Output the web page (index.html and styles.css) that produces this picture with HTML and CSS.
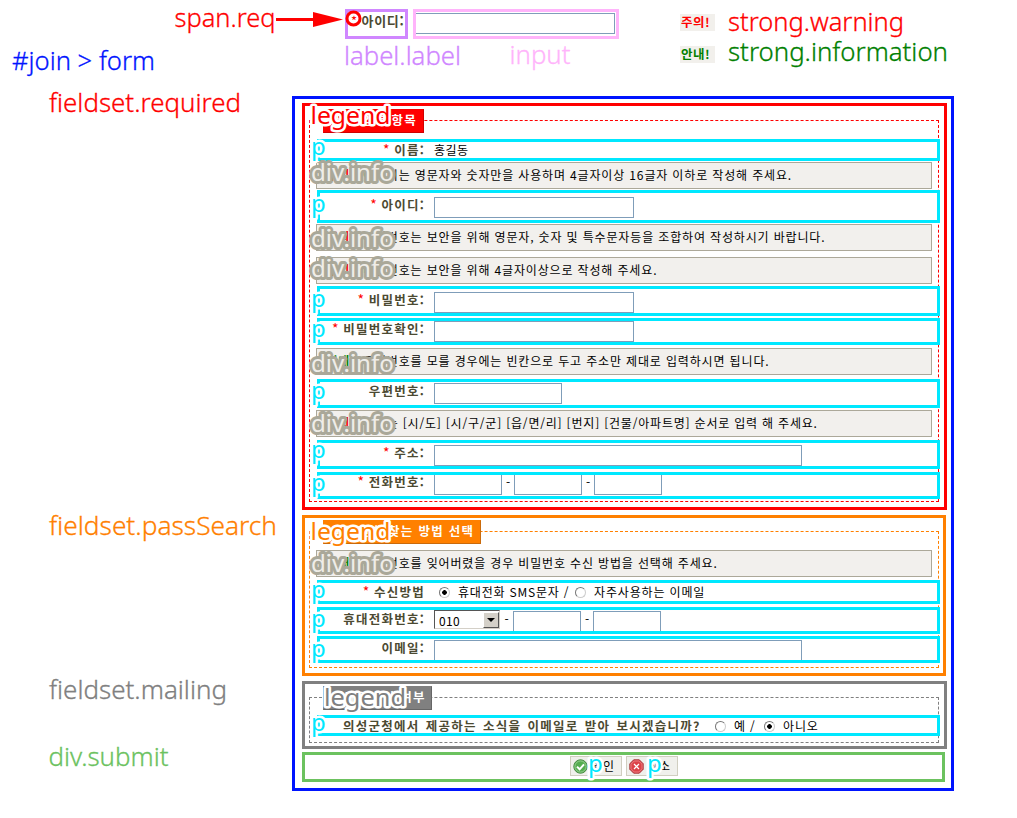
FILE: index.html
```html
<!DOCTYPE html>
<html lang="ko">
<head>
<meta charset="utf-8">
<title>join form</title>
<link rel="stylesheet" href="styles.css">
</head>
<body>
<main class="sheet">
  <div class="samples">
    <div class="sample-label"><span class="req">*</span><b>아이디:</b></div>
    <div class="sample-input"><span></span></div>
    <div class="sample-notes"><strong class="warning">주의!</strong><strong class="information">안내!</strong></div>
  </div>

  <div class="join">
    <section class="group required">
      <div class="fieldset">
        <div class="legend">필수 입력 항목</div>
        <div class="row name"><label><i>*</i> 이름:</label><span class="txt">홍길동</span></div>
        <div class="info i1"><strong class="warning">주의!</strong><span>아이디는 영문자와 숫자만을 사용하며 4글자이상 16글자 이하로 작성해 주세요.</span></div>
        <div class="row userid"><label><i>*</i> 아이디:</label><span class="input w200"></span></div>
        <div class="info i2"><strong class="warning">주의!</strong><span>비밀번호는 보안을 위해 영문자, 숫자 및 특수문자등을 조합하여 작성하시기 바랍니다.</span></div>
        <div class="info i3"><strong class="warning">주의!</strong><span>비밀번호는 보안을 위해 4글자이상으로 작성해 주세요.</span></div>
        <div class="row pass"><label><i>*</i> 비밀번호:</label><span class="input w200"></span></div>
        <div class="row pass2"><label><i>*</i> 비밀번호확인:</label><span class="input w200"></span></div>
        <div class="info i4"><strong class="information">안내!</strong><span>우편번호를 모를 경우에는 빈칸으로 두고 주소만 제대로 입력하시면 됩니다.</span></div>
        <div class="row zip"><label>우편번호:</label><span class="input w128"></span></div>
        <div class="info i5"><strong class="warning">주의!</strong><span>주소는 [시/도] [시/구/군] [읍/면/리] [번지] [건물/아파트명] 순서로 입력 해 주세요.</span></div>
        <div class="row addr"><label><i>*</i> 주소:</label><span class="input w368"></span></div>
        <div class="row tel"><label><i>*</i> 전화번호:</label><span class="input w68"></span><em>-</em><span class="input w68"></span><em>-</em><span class="input w68"></span></div>
      </div>
    </section>

    <section class="group search">
      <div class="fieldset">
        <div class="legend">비밀번호 찾는 방법 선택</div>
        <div class="info i6"><strong class="information">안내!</strong><span>비밀번호를 잊어버렸을 경우 비밀번호 수신 방법을 선택해 주세요.</span></div>
        <div class="row method"><label><i>*</i> 수신방법</label><span class="radio on"></span><span class="txt sms">휴대전화 SMS문자 /</span><span class="radio"></span><span class="txt">자주사용하는 이메일</span></div>
        <div class="row mobile"><label>휴대전화번호:</label><span class="select"><span>010</span><span class="arrow"></span></span><em>-</em><span class="input w68"></span><em>-</em><span class="input w68"></span></div>
        <div class="row email"><label>이메일:</label><span class="input w368"></span></div>
      </div>
    </section>

    <section class="group mailing">
      <div class="fieldset">
        <div class="legend">이메일수신 여부</div>
        <div class="row news"><label>의성군청에서 제공하는 소식을 이메일로 받아 보시겠습니까?</label><span class="radio"></span><span class="txt yes">예 /</span><span class="radio on"></span><span class="txt">아니오</span></div>
      </div>
    </section>

    <div class="submit">
      <div class="button">
        <svg width="15" height="15" viewBox="0 0 15 15"><circle cx="7.5" cy="7.5" r="6.7" fill="#55ad50" stroke="#43883f"/><circle cx="7.5" cy="7.5" r="5.6" fill="none" stroke="#a4d7a0" stroke-width=".8"/><path d="M4 7.6l2.6 2.7L11 5.4" fill="none" stroke="#fff" stroke-width="2"/></svg>
        <span>확인</span>
      </div>
      <div class="button">
        <svg width="15" height="15" viewBox="0 0 15 15"><path d="M4.7 .8h5.6l3.9 3.9v5.6l-3.9 3.9H4.700L.8 10.300V4.700z" fill="#dc4248" stroke="#a83c40"/><path d="M5.200 2h4.600L13 5.200v4.600L9.800 13H5.200L2 9.800V5.200z" fill="none" stroke="#f08a8d" stroke-width=".8"/><path d="M5 5l5 5M10 5l-5 5" stroke="#fff" stroke-width="1.2"/></svg>
        <span>취소</span>
      </div>
    </div>
  </div>

  <svg class="notes" width="1017" height="818" viewBox="0 0 1017 818">
    <g class="title">
      <text class="c-red" x="174.500" y="27" textLength="101" lengthAdjust="spacingAndGlyphs">span.req</text>
      <text class="c-blue" x="12" y="70" textLength="143" lengthAdjust="spacingAndGlyphs">#join &gt; form</text>
      <text class="c-red" x="49" y="112" textLength="192" lengthAdjust="spacingAndGlyphs">fieldset.required</text>
      <text class="c-violet" x="344" y="65" textLength="117" lengthAdjust="spacingAndGlyphs">label.label</text>
      <text class="c-pink" x="509.500" y="64" textLength="61" lengthAdjust="spacingAndGlyphs">input</text>
      <text class="c-red" x="728" y="31" textLength="176" lengthAdjust="spacingAndGlyphs">strong.warning</text>
      <text class="c-green" x="728" y="61" textLength="220" lengthAdjust="spacingAndGlyphs">strong.information</text>
      <text class="c-orange" x="49" y="535" textLength="228" lengthAdjust="spacingAndGlyphs">fieldset.passSearch</text>
      <text class="c-gray" x="49" y="699" textLength="178" lengthAdjust="spacingAndGlyphs">fieldset.mailing</text>
      <text class="c-lime" x="48.500" y="766" textLength="120" lengthAdjust="spacingAndGlyphs">div.submit</text>
    </g>
    <path d="M276 19.500H316" stroke="#f00" stroke-width="3"/>
    <path d="M313 12L343 19.500L313 27Z" fill="#f00"/>
    <circle cx="353.500" cy="18.500" r="6.500" fill="none" stroke="#f00" stroke-width="3"/>
    <g class="tag">
      <text class="c-red" x="310.500" y="123.500" textLength="80" lengthAdjust="spacingAndGlyphs">legend</text>
      <text class="c-orange" x="310.500" y="540" textLength="80" lengthAdjust="spacingAndGlyphs">legend</text>
      <text class="c-gray" x="324" y="706" textLength="82" lengthAdjust="spacingAndGlyphs">legend</text>
    </g>
    <g class="tag c-cyan">
      <text x="311" y="154.500">p</text><text x="311" y="212">p</text><text x="311" y="307">p</text><text x="311" y="336.500">p</text>
      <text x="311" y="399">p</text><text x="311" y="458">p</text><text x="311" y="491">p</text><text x="311" y="598">p</text>
      <text x="311" y="627">p</text><text x="311" y="657">p</text><text x="311" y="731">p</text>
      <text x="588" y="772">p</text><text x="647" y="772">p</text>
    </g>
    <g class="tag infotag">
      <text x="311" y="181" textLength="83" lengthAdjust="spacingAndGlyphs">div.info</text>
      <text x="311" y="247" textLength="83" lengthAdjust="spacingAndGlyphs">div.info</text>
      <text x="311" y="276.500" textLength="83" lengthAdjust="spacingAndGlyphs">div.info</text>
      <text x="311" y="372" textLength="83" lengthAdjust="spacingAndGlyphs">div.info</text>
      <text x="311" y="431.500" textLength="83" lengthAdjust="spacingAndGlyphs">div.info</text>
      <text x="311" y="571.500" textLength="83" lengthAdjust="spacingAndGlyphs">div.info</text>
    </g>
  </svg>
</main>
</body>
</html>
```
FILE: styles.css
```css
* { box-sizing: border-box; }
body {
  margin: 0;
  background: #fff;
  color: #000;
  font: 12px/16px "Noto Sans CJK KR", sans-serif;
  letter-spacing: 0.85px;
}
i, em { font-style: normal; }
.sheet { position: relative; width: 1017px; height: 818px; overflow: hidden; }
.notes { position: absolute; left: 0; top: 0; }

/* element samples above the form */
.samples { display: flex; height: 96px; padding: 9px 0 0 345px; }
.sample-label { width: 63px; height: 30px; border: 3px solid #d087ff; padding: 1px 0 0 3px; color: #4c4a32; white-space: nowrap; display: flex; font-size: 13px; letter-spacing: 0.7px; }
.sample-label .req { width: 10.500px; }
.sample-input { width: 206px; height: 30px; margin-left: 5px; border: 3px solid #ffb4fb; padding-top: 1px; }
.sample-input span { display: block; width: 199px; height: 21px; border: 1px solid #7f9db9; border-left: 0; }
.sample-notes { margin: 5px 0 0 61px; display: flex; flex-direction: column; gap: 15px; letter-spacing: 0.5px; }
.sample-notes strong { width: 35px; height: 17px; padding-left: 1px; background: #f2f0ec; font-size: 12.500px; }
.req, i { color: #f00; font-weight: 400; }
.warning { color: #f00; }
.information { color: #008000; }

.join { margin-left: 292px; width: 662px; height: 695px; border: 3px solid #0014ff; padding: 4px 0 0 7px; }
.group { width: 645px; border: 3px solid; }
.group.required { height: 407px; color: #f00; padding: 14px 0 0 4px; }
.group.search { width: 644px; height: 161px; margin-top: 5px; color: #ff8000; padding: 13px 0 0 4px; }
.group.mailing { height: 68px; margin-top: 5px; color: #808080; padding: 13px 0 0 4px; }
.fieldset { width: 630px; border: 1px dashed; }
.required .fieldset { height: 382px; }
.search .fieldset { height: 137px; }
.mailing .fieldset { height: 46px; }
.legend {
  width: 101px; height: 24px; margin: -12px 0 0 13px; padding: 2px 8px;
  background: #f00; border: 1px solid #d00000; border-top-color: #f00; border-left-color: #f00;
  color: #fff; font-size: 12.500px; font-weight: 700; white-space: nowrap; letter-spacing: 1.100px;
}
.search .legend { width: 158px; background: #ff8000; border-color: #ff8000 #c96a0c #c96a0c #ff8000; letter-spacing: 1.300px; }
.mailing .legend { width: 109px; background: #808080; border-color: #808080 #666 #666 #808080; letter-spacing: 1.200px; }

.info {
  display: flex; align-items: center; width: 616px; height: 27px; margin-left: 6px; padding: 0 0 1px 10px;
  border: 1px solid #aca899; background: #f2f0ed; color: #000; white-space: nowrap;
}
.info strong { width: 36px; letter-spacing: 0.300px; }
.i5 { letter-spacing: 0.800px; }
.row { display: flex; width: 623px; margin-left: 7px; border: 3px solid #00e8ff; background: #fff; color: #000; overflow: hidden; white-space: nowrap; }
.row label { flex: none; width: 105px; margin-right: 9px; text-align: right; font-size: 12.500px; font-weight: 700; color: #4c4a32; letter-spacing: 1.250px; }
.row label i { font-size: 14px; line-height: 12px; letter-spacing: 0; }
.row em { flex: none; width: 12px; text-align: center; letter-spacing: 0; }
.input { flex: none; height: 21px; border: 1px solid #7f9db9; background: #fff; }
.w68 { width: 68px; }
.w128 { width: 128px; }
.w200 { width: 200px; }
.w368 { width: 368px; }

.name { height: 22px; margin-top: 6px; }
.name .txt { letter-spacing: 0.400px; }
.i1 { margin-top: 1px; }
.userid { height: 33px; margin-top: 1px; padding-top: 4px; }
.i2 { margin-top: 1px; }
.i3 { margin-top: 6px; }
.pass { height: 30px; margin-top: 2px; padding-top: 3px; }
.pass2 { height: 27px; margin-top: 2px; }
.i4 { margin-top: 3px; }
.zip { height: 29px; margin-top: 4px; padding-top: 1px; }
.i5 { margin-top: 2px; }
.addr { height: 29px; margin-top: 3px; padding-top: 2px; }
.tel { height: 27px; margin-top: 3px; }
.tel > * { margin-top: -1px; }
.i6 { margin-top: 6px; }
.method { height: 24px; margin-top: 3px; padding-top: 1px; }
.mobile { height: 27px; margin-top: 3px; padding-top: 1px; }
.email { height: 27px; margin-top: 2px; padding-top: 1px; }
.news { height: 21px; margin-top: 5px; }

.radio { flex: none; width: 11px; height: 11px; margin: 3px 8px 0 5px; border: 1px solid; border-color: #777 #ccc #ccc #777; border-radius: 50%; background: #fff; }
.radio.on { background: radial-gradient(circle, #000 0 2px, #fff 2.600px); }
.sms { width: 117px; letter-spacing: 0.800px; }
.method .radio + .txt + .radio { margin-left: 0; }
.news label { width: 381px; margin: 0; padding-left: 23px; text-align: left; word-spacing: 1.500px; }
.news .radio { margin: 3px 8px 0 14px; }
.news .yes { width: 16px; }
.select { flex: none; display: flex; justify-content: space-between; width: 66px; height: 19px; margin-top: -1px; border: 1px solid #d4d0c8; border-top-color: #555; border-left-color: #555; padding-left: 4px; line-height: 20px; letter-spacing: 0.300px; }
.arrow { width: 16px; height: 16px; margin-top: 1px; background: #d4d0c8; border: 1px solid; border-color: #fff #555 #555 #fff; display: flex; align-items: center; justify-content: center; }
.arrow::before { content: ""; border: 4px solid transparent; border-top-color: #000; border-bottom: 0; }
.mobile em:first-of-type { width: 13px; }

.submit { display: flex; gap: 4px; width: 643px; height: 30px; margin-top: 3px; border: 3px solid #6cc25f; padding: 1px 0 0 265px; }
.button { display: flex; width: 52px; height: 20px; border: 1px solid #d0cec0; background: #f0f0ec; padding: 2px 0 0 2px; }
.button svg { flex: none; }
.button span { margin: -1px 0 0 3px; color: #000; white-space: nowrap; }

/* annotation lettering */
.title, .tag { font-family: "Noto Sans", sans-serif; font-size: 25px; font-weight: 300; letter-spacing: 0; }
.tag { font-size: 24px; font-weight: 400; stroke: #fff; stroke-width: 5px; stroke-linejoin: round; paint-order: stroke fill; }
.c-red { fill: #f00; }
.c-blue { fill: #0014ff; }
.c-violet { fill: #d087ff; }
.c-pink { fill: #ffb4fb; }
.c-green { fill: #008000; }
.c-orange { fill: #ff8000; }
.c-gray { fill: #808080; }
.c-lime { fill: #6cc25f; }
.c-cyan { fill: #00e8ff; }
.title .c-red { stroke: #f00; }
.title .c-blue { stroke: #0014ff; }
.title .c-violet { stroke: #d087ff; }
.title .c-pink { stroke: #ffb4fb; }
.title .c-green { stroke: #008000; }
.title .c-orange { stroke: #ff8000; }
.title .c-gray { stroke: #808080; }
.title .c-lime { stroke: #6cc25f; }
.title text { stroke-width: 0.300px; }
.infotag { fill: #efede8; stroke: #aaa899; stroke-width: 6px; }
```
